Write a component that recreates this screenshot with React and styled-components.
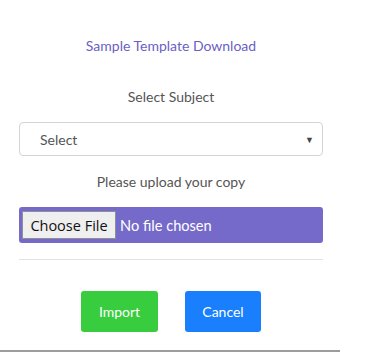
import React from "react";
import styled, { createGlobalStyle } from "styled-components";

const Global = createGlobalStyle`
  html, body { margin: 0; padding: 0; background: #fff; }
  body { font-family: Lato, "Noto Sans", sans-serif; }
`;

const Panel = styled.div`
  width: 340px;
  height: 352px;
  box-sizing: border-box;
  border-bottom: 2px solid #9c9c9c;
  padding: 36px 17px 0 19px;
  display: flex;
  flex-direction: column;
`;

const Title = styled.a`
  display: block;
  text-align: center;
  font-size: 14px;
  line-height: 20px;
  color: #6a5fc4;
  text-decoration: none;
`;

const Label = styled.div`
  text-align: center;
  font-size: 14px;
  line-height: 20px;
  color: #555;
  margin-top: ${(p) => p.$mt}px;
`;

const SelectBox = styled.div`
  margin-top: 15px;
  height: 34px;
  box-sizing: border-box;
  border: 1px solid #d4d4d4;
  border-radius: 4px;
  display: flex;
  align-items: center;
  justify-content: space-between;
  padding: 0 8px 0 20px;
  font-size: 14px;
  color: #555;
`;

const Arrow = styled.span`
  font-size: 9px;
  color: #444;
  line-height: 1;
`;

const FileRow = styled.div`
  margin-top: 15px;
  height: 36px;
  box-sizing: border-box;
  background: #756aca;
  border-radius: 3px;
  display: flex;
  align-items: center;
  padding-left: 3px;
  gap: 4px;
`;

const FileButton = styled.button`
  height: 28px;
  width: 94px;
  box-sizing: border-box;
  background: #efefef;
  border: 1px solid #8f8f8f;
  border-radius: 0;
  font-family: "Open Sans", "Liberation Sans", sans-serif;
  font-size: 14.5px;
  color: #111;
  padding: 0;
`;

const FileText = styled.span`
  color: #fff;
  font-size: 14.6px;
`;

const Divider = styled.hr`
  margin: 16px 0 0;
  border: none;
  border-top: 1px solid #e3e3e3;
  height: 0;
`;

const Actions = styled.div`
  margin-top: 31px;
  display: flex;
  justify-content: center;
  gap: 27px;
`;

const Btn = styled.button`
  width: ${(p) => p.$w}px;
  height: 41px;
  border: none;
  border-radius: 3px;
  background: ${(p) => p.$bg};
  color: #fff;
  font-family: Lato, "Noto Sans", sans-serif;
  font-size: 14px;
`;

export default function App() {
  return (
    <>
      <Global />
      <Panel>
        <Title href="#">Sample Template Download</Title>
        <Label $mt={31}>Select Subject</Label>
        <SelectBox>
          <span>Select</span>
          <Arrow>▼</Arrow>
        </SelectBox>
        <Label $mt={16}>Please upload your copy</Label>
        <FileRow>
          <FileButton>Choose File</FileButton>
          <FileText>No file chosen</FileText>
        </FileRow>
        <Divider />
        <Actions>
          <Btn $w={77} $bg="#37cd3e">Import</Btn>
          <Btn $w={76} $bg="#197ffd">Cancel</Btn>
        </Actions>
      </Panel>
    </>
  );
}
